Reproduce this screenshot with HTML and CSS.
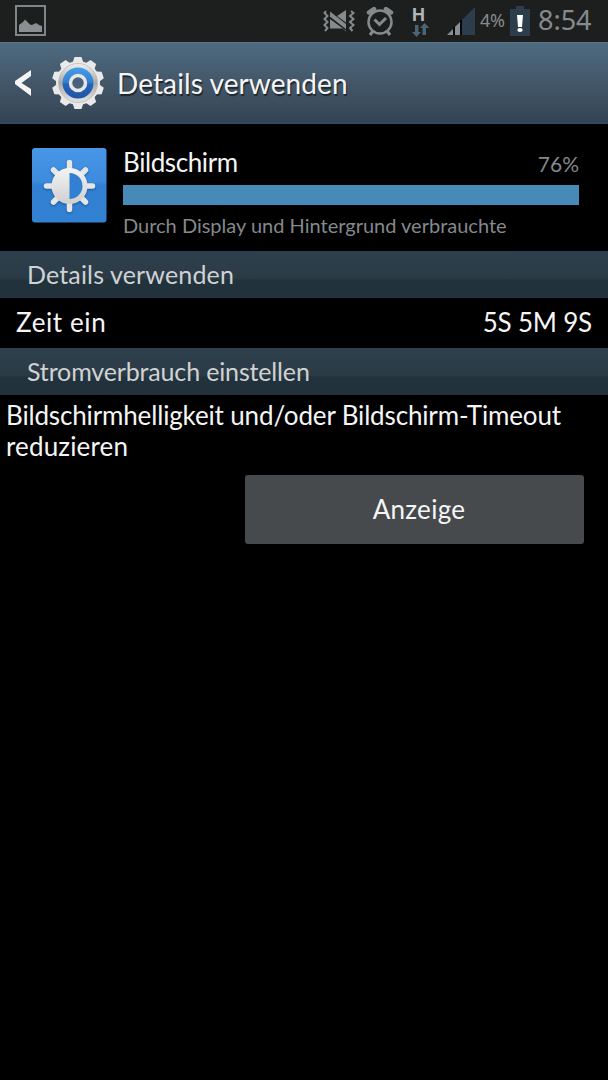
FILE: index.html
```html
<!DOCTYPE html>
<html lang="de">

<head>
  <meta charset="UTF-8">
  <meta name="viewport" content="width=device-width, initial-scale=1.0">
  <title>Details verwenden</title>
  <link rel="stylesheet" href="styles.css">
</head>

<body>
  <div class="status-bar">
    <svg class="icon-picture" width="32" height="32" viewBox="0 0 32 32">
      <rect x="1" y="1" width="29" height="29" fill="none" stroke="#7f868a" stroke-width="2" />
      <path d="M4 27V20L8 17L10 14.500L15 19.500L17 20L21 18L24 20L27 21V27Z" fill="#8a8e90" />
    </svg>
    <div class="status-right">
      <svg class="icon-vibrate" width="32" height="24" viewBox="0 0 32 24">
        <path d="M3 1L1.500 3L4.500 6L1.500 9L4.500 12L1.500 15L4.500 18L2 21M28 1L30.500 3L27 6L30.500 9L27 12L30.500 15L27 18L29.500 21" fill="none" stroke="#858a8d" stroke-width="2" />
        <path d="M14 6L23 0V12.500ZM7 9L20 18.500H7ZM7 1.500L23 14V21.500L7 7Z" fill="#858a8d" />
        <path d="M7 7.500L23 20" stroke="#1d1f1e" stroke-width="1.500" />
      </svg>
      <svg class="icon-alarm" width="28" height="30" viewBox="0 0 28 30">
        <circle cx="14" cy="16" r="11.500" fill="none" stroke="#858a8d" stroke-width="2.500" />
        <path d="M3 6.500L8 3M25 6.500L20 3" stroke="#858a8d" stroke-width="4.500" stroke-linecap="round" />
        <path d="M8.500 13.500L13.500 18.500L20 12" fill="none" stroke="#858a8d" stroke-width="3" />
        <path d="M7 25L4 29M21 25L24 29" stroke="#858a8d" stroke-width="3" />
      </svg>
      <div class="network">
        <span>H</span>
        <svg width="18" height="14" viewBox="0 0 18 14">
          <path d="M3 2H6.500V9H9L4.500 14L0 9H3Z" fill="#4d6475" />
          <path d="M10.500 12V5H8L12.500 0L17.500 5H14V12Z" fill="#4d6475" />
        </svg>
      </div>
      <svg class="icon-signal" width="28" height="28" viewBox="0 0 28 28">
        <path d="M28 0V28H0Z" fill="#2c3e4b" />
        <path d="M6 22V28H0ZM13 15V28H8V20Z" fill="#8a8e90" />
        <path d="M7 20V28M14 13V28" stroke="#050809" stroke-width="2" />
      </svg>
      <span class="percent">4%</span>
      <svg class="icon-battery" width="20" height="30" viewBox="0 0 20 30">
        <path d="M6 0H14V3H20V30H0V3H6Z" fill="#2c3e4b" />
        <path d="M7 9H13L12 21H8Z" fill="#fff" />
        <ellipse cx="10" cy="24" rx="2.700" ry="2" fill="#fff" />
      </svg>
      <span class="clock">8:54</span>
    </div>
  </div>

  <div class="action-bar">
    <svg class="icon-back" width="18" height="28" viewBox="0 0 18 28">
      <path d="M16 1V7L6.500 14L16 20V27L0 15V12Z" fill="#f5f5f5" />
    </svg>
    <svg class="icon-gear" width="54" height="56" viewBox="-27 -28 54 56">
      <defs>
        <linearGradient id="metal" x1="0" y1="0" x2="0" y2="1">
          <stop offset="0" stop-color="#efefef" />
          <stop offset=".5" stop-color="#aaa" />
          <stop offset="1" stop-color="#e4e4e4" />
        </linearGradient>
        <linearGradient id="blue" x1="0" y1="0" x2="0" y2="1">
          <stop offset="0" stop-color="#469cea" />
          <stop offset=".45" stop-color="#3682d2" />
          <stop offset=".55" stop-color="#2264b8" />
          <stop offset="1" stop-color="#2255a3" />
        </linearGradient>
        <path id="tooth" d="M-5.500 -20L-3.500 -26H3.500L5.500 -20Z" />
      </defs>
      <g fill="#e9e9e9">
        <use href="#tooth" />
        <use href="#tooth" transform="rotate(36)" />
        <use href="#tooth" transform="rotate(72)" />
        <use href="#tooth" transform="rotate(108)" />
        <use href="#tooth" transform="rotate(144)" />
        <use href="#tooth" transform="rotate(180)" />
        <use href="#tooth" transform="rotate(216)" />
        <use href="#tooth" transform="rotate(252)" />
        <use href="#tooth" transform="rotate(288)" />
        <use href="#tooth" transform="rotate(324)" />
      </g>
      <circle r="22" fill="#e9e9e9" />
      <circle r="19.500" fill="url(#metal)" stroke="#b4b4b4" stroke-width=".7" />
      <circle r="15.500" fill="url(#blue)" />
      <circle r="7.500" fill="#49617a" stroke="#e6e6e6" stroke-width="3.500" />
    </svg>
    <h1>Details verwenden</h1>
  </div>

  <div class="usage">
    <svg class="icon-display" width="75" height="75" viewBox="0 0 75 75">
      <defs>
        <linearGradient id="tile" x1="0" y1="0" x2="0" y2="1">
          <stop offset="0" stop-color="#4896e6" />
          <stop offset=".45" stop-color="#3c8bdd" />
          <stop offset=".5" stop-color="#3180d2" />
          <stop offset="1" stop-color="#3381d2" />
        </linearGradient>
        <linearGradient id="sun" x1="0" y1="0" x2="0" y2="1">
          <stop offset="0" stop-color="#f4f4f4" />
          <stop offset="1" stop-color="#cfcfcf" />
        </linearGradient>
      </defs>
      <rect width="74.500" height="74.500" rx="3" fill="url(#tile)" />
      <g class="sun">
        <path d="M37.500 14.500V24M37.500 52V61.500M14.500 38H24M51 38H60.500M21.500 22L28 28.500M47 47.500L53.500 54M21.500 54L28 47.500M47 28.500L53.500 22" stroke="#e6e6e6" stroke-width="5.500" stroke-linecap="round" />
        <circle cx="37.500" cy="38" r="18" fill="url(#sun)" />
        <path d="M37.500 25A13 13 0 0 1 37.500 51Z" fill="#3180d2" />
      </g>
    </svg>
    <div class="usage-info">
      <div class="usage-title">
        <span class="name">Bildschirm</span>
        <span class="value">76%</span>
      </div>
      <div class="bar"></div>
      <p>Durch Display und Hintergrund verbrauchte</p>
    </div>
  </div>

  <h2 class="head-details">Details verwenden</h2>
  <div class="row">
    <span class="row-label">Zeit ein</span>
    <span class="row-value">5S 5M 9S</span>
  </div>
  <h2 class="head-power">Stromverbrauch einstellen</h2>
  <p class="hint"><span>Bildschirmhelligkeit und/oder Bildschirm-Timeout</span><br><span class="hint-end">reduzieren</span></p>
  <button class="btn-display">Anzeige</button>
</body>

</html>
```
FILE: styles.css
```css
body {
  margin: 0;
  height: 1080px;
  background-color: #000;
  color: #f5f5f5;
  font-family: Lato, "Liberation Sans", sans-serif;
  font-size: 26px;
  overflow: hidden;
}

h1,
h2,
p {
  margin: 0;
  font-weight: normal;
}

svg {
  display: block;
  flex-shrink: 0;
}

.status-bar {
  display: flex;
  justify-content: space-between;
  height: 42px;
  padding: 0 16px 0 15px;
  box-sizing: border-box;
  background-color: #1d1f1e;
}

.icon-picture {
  margin-top: 5px;
}

.status-right {
  display: flex;
  color: #858a8d;
}

.icon-vibrate {
  margin-top: 10px;
}

.icon-alarm {
  margin: 6px 0 0 11px;
}

.network {
  width: 18px;
  margin: 6px 0 0 18px;
}

.network span {
  display: block;
  height: 17px;
  font: bold 18px/18px "Liberation Sans", sans-serif;
  color: #b4b7b9;
}

.icon-signal {
  margin: 7px 0 0 17px;
}

.percent {
  width: 26px;
  margin-left: 5px;
  font: 18px/41px "Noto Sans", sans-serif;
  letter-spacing: -0.2px;
}

.icon-battery {
  margin: 6px 0 0 4px;
}

.clock {
  width: 54px;
  margin-left: 8px;
  font: 27px/39px "Noto Sans", sans-serif;
  white-space: nowrap;
}

.action-bar {
  display: flex;
  height: 82px;
  padding-left: 15px;
  box-sizing: border-box;
  border-top: 1px solid #59758b;
  border-bottom: 2px solid #304b60;
  background: linear-gradient(#4e6a80, #435769 50%, #344454);
}

.icon-back {
  margin-top: 26px;
}

.icon-gear {
  margin: 12px 0 0 18px;
}

.action-bar h1 {
  margin-left: 12px;
  font-size: 28px;
  line-height: 81px;
  letter-spacing: 0.1px;
  text-shadow: 1px 2px 1px #1c252d;
}

.usage {
  display: flex;
  height: 127px;
  padding: 24px 29px 0 32px;
  box-sizing: border-box;
}

.sun {
  filter: drop-shadow(0 1px 1px #1a5797);
}

.usage-info {
  flex: 1;
  margin-left: 16px;
}

.usage-title {
  display: flex;
  justify-content: space-between;
  height: 37px;
  line-height: 29px;
}

.name {
  letter-spacing: -0.4px;
}

.value {
  color: #84898c;
  font-size: 21px;
  line-height: 32px;
}

.bar {
  height: 20px;
  background-color: #468ab8;
}

.usage p {
  color: #84898c;
  font-size: 20px;
  line-height: 40px;
  white-space: nowrap;
}

h2 {
  height: 47px;
  padding-left: 27px;
  background: linear-gradient(#2e404d, #2b3b46 58%, #22323c 62%, #22323c);
  color: #d0d2d3;
  font-size: 25px;
  line-height: 46px;
}

.head-details {
  letter-spacing: 0.15px;
}

.head-power {
  letter-spacing: -0.15px;
}

.row {
  display: flex;
  justify-content: space-between;
  height: 50px;
  padding: 0 16px;
  line-height: 49px;
}

.row-label {
  letter-spacing: 0.6px;
}

.row-value {
  letter-spacing: -0.2px;
}

.hint {
  padding: 5px 0 0 6px;
  line-height: 31px;
  letter-spacing: -0.15px;
  white-space: nowrap;
}

.hint-end {
  letter-spacing: 0.15px;
}

.btn-display {
  display: block;
  width: 339px;
  height: 69px;
  margin: 13px 0 0 245px;
  padding: 0 0 0 9px;
  border: none;
  border-radius: 3px;
  background-color: #464a4d;
  color: #f5f5f5;
  font: 26px/67px Lato, "Liberation Sans", sans-serif;
  letter-spacing: 0.3px;
}
```
